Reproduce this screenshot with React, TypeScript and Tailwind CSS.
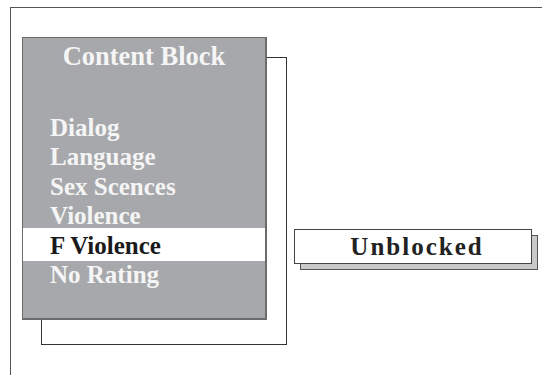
import React from 'react'

const items = ['Dialog', 'Language', 'Sex Scences', 'Violence', 'F Violence', 'No Rating']
const selected = 'F Violence'

export default function App() {
  return (
    <div
      className="w-[542px] h-[375px] overflow-hidden bg-white pt-[7px] pl-[10px]"
      style={{ fontFamily: '"Liberation Serif", "Times New Roman", serif' }}
    >
      <div className="h-[400px] border-t border-l border-[#555555] flex items-start">
        {/* Menu panel with its back frame */}
        <div className="relative ml-[11px] mt-[29px] w-[265px] h-[308px]">
          <div className="absolute left-[19px] top-[20px] w-[246px] h-[288px] border border-[#333333] bg-white" />
          <div className="relative w-[245px] h-[283px] bg-[#a7a8ab] border border-[#6b6b6b] border-r-2 border-b-2 pt-[3px]">
            <div className="text-center text-[26.5px] leading-[30px] font-bold text-[#f5f5f5]">Content Block</div>
            <div className="mt-[42px]">
              {items.map((it) => (
                <div
                  key={it}
                  className={
                    it === selected
                      ? 'bg-white text-[#1a1a1a] pl-[27px] -mt-[3px] pt-[3px] pb-[1px] -mb-[1px] text-[25px] leading-[29.4px] font-bold'
                      : 'text-[#f5f5f5] pl-[27px] text-[25px] leading-[29.4px] font-bold'
                  }
                >
                  {it}
                </div>
              ))}
            </div>
          </div>
        </div>

        {/* Status box */}
        <div className="relative ml-[7px] mt-[221px] w-[244px] h-[41px]">
          <div className="absolute left-[6px] top-[6px] w-[238px] h-[35px] bg-[#c9c9cb] border border-[#555555]" />
          <div className="relative w-[238px] h-[35px] bg-white border border-[#444444] flex items-center justify-center pl-[8px]">
            <span className="text-[25px] leading-[30px] font-bold tracking-[2px] text-[#222222]">Unblocked</span>
          </div>
        </div>
      </div>
    </div>
  )
}
